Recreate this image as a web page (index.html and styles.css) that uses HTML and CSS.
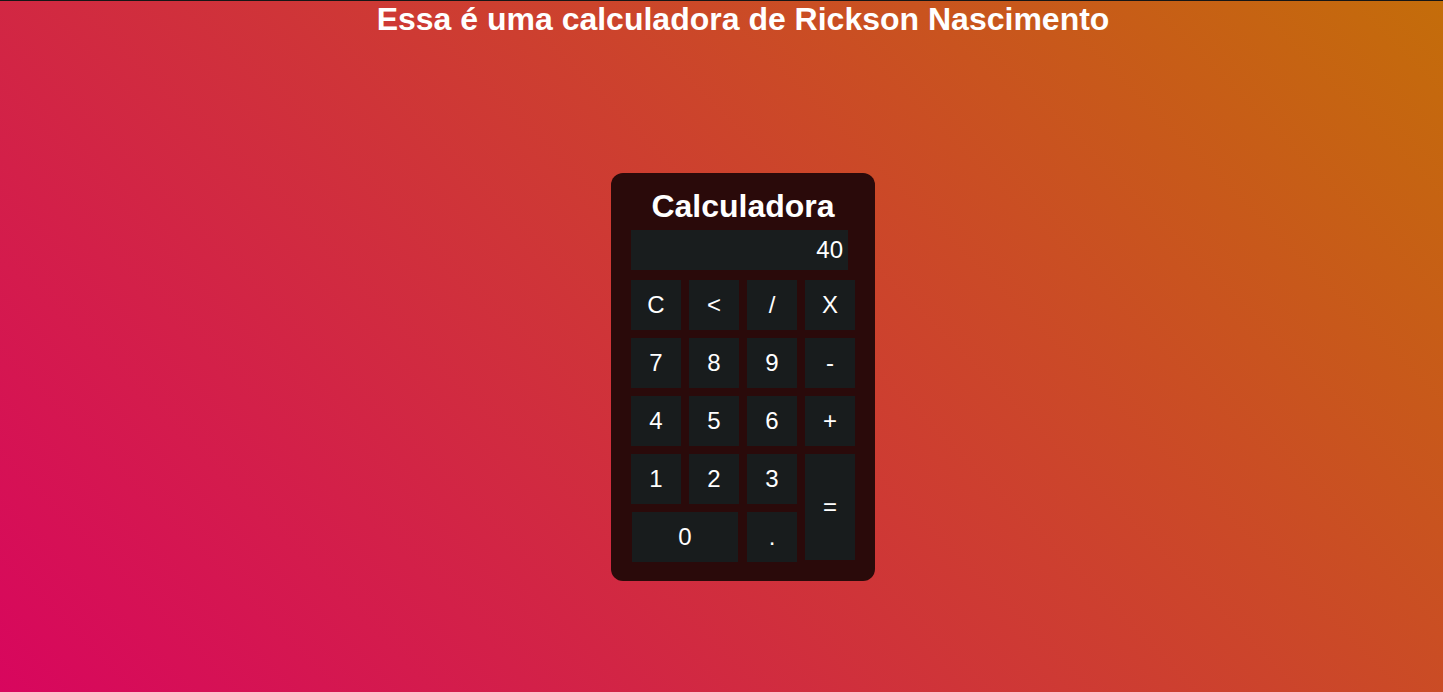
FILE: index.html
```html
<!DOCTYPE html>
<html lang="pt-BR">
<head>
<meta charset="utf-8">
<title>Calculadora</title>
<link rel="stylesheet" href="styles.css">
</head>
<body>
<div class="page">
  <h1 class="headline">Essa é uma calculadora de Rickson Nascimento</h1>
  <main class="stage">
    <div class="calc">
      <h2 class="calc-title">Calculadora</h2>
      <div class="display">40</div>
      <div class="keys">
        <button class="key">C</button>
        <button class="key">&lt;</button>
        <button class="key">/</button>
        <button class="key">X</button>
        <button class="key">7</button>
        <button class="key">8</button>
        <button class="key">9</button>
        <button class="key">-</button>
        <button class="key">4</button>
        <button class="key">5</button>
        <button class="key">6</button>
        <button class="key">+</button>
        <button class="key">1</button>
        <button class="key">2</button>
        <button class="key">3</button>
        <button class="key key-equals">=</button>
        <button class="key key-zero">0</button>
        <button class="key">.</button>
      </div>
    </div>
  </main>
</div>
</body>
</html>
```

FILE: styles.css
```css
html, body {
  margin: 0;
  padding: 0;
}

body {
  min-height: 100vh;
  box-sizing: border-box;
  border-top: 1px solid #161616;
  background: linear-gradient(45deg, #d8065e 0%, #c46d0a 100%);
  font-family: "Liberation Sans", Arial, sans-serif;
  color: #ffffff;
}

.page {
  padding-left: 43px;
}

.headline {
  margin: 0;
  text-align: center;
  font-size: 32px;
  font-weight: bold;
  line-height: 37px;
  color: #ffffff;
}

.stage {
  display: flex;
  justify-content: center;
  padding-top: 135px;
}

.calc {
  width: 264px;
  box-sizing: border-box;
  padding: 15px 20px 19px;
  background: #2a0a0a;
  border-radius: 12px;
}

.calc-title {
  margin: 0 0 5px;
  text-align: center;
  font-size: 32px;
  font-weight: bold;
  line-height: 37px;
  color: #ffffff;
}

.display {
  width: 217px;
  height: 40px;
  box-sizing: border-box;
  padding-right: 5px;
  background: #191d1e;
  text-align: right;
  font-size: 24px;
  line-height: 40px;
  color: #ffffff;
  margin-bottom: 10px;
}

.keys {
  display: grid;
  grid-template-columns: repeat(4, 50px);
  grid-auto-rows: 50px;
  gap: 8px;
}

.key {
  margin: 0;
  padding: 0;
  border: none;
  background: #181c1d;
  color: #ffffff;
  font-family: "Liberation Sans", Arial, sans-serif;
  font-size: 24px;
}

.key-equals {
  grid-column: 4;
  grid-row: 4 / span 2;
  height: 106px;
  align-self: start;
}

.key-zero {
  grid-column: 1 / span 2;
  grid-row: 5;
  width: 106px;
  justify-self: center;
}
```
